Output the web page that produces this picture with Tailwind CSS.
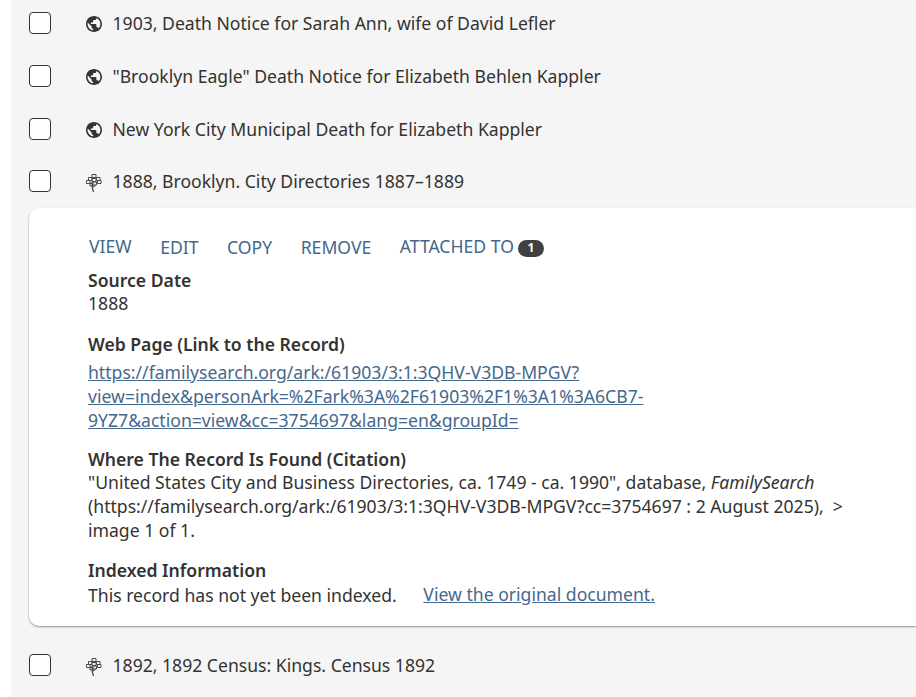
<!DOCTYPE html>
<html lang="en">
<head>
    <meta charset="UTF-8">
    <title>Sources</title>
    <script src="https://cdn.jsdelivr.net/npm/@tailwindcss/browser@4"></script>
</head>
<body class="bg-white overflow-hidden h-[697px] font-['Noto_Sans',sans-serif] text-[#333331] text-[17.6px]">
    <div class="ml-[11px] bg-[#f5f5f5] h-[697px] pl-[18px]">
        <!-- source rows -->
        <div class="flex items-center h-[46px] mb-[7px]">
            <div class="w-[22px] h-[22px] border border-[#333331] rounded-[4px] bg-white"></div>
            <svg class="ml-[35px] w-[16px] h-[16px] mt-[2px] text-[#333331]" viewBox="2 2 20 20"><path fill="currentColor" d="M12 2C6.480 2 2 6.480 2 12s4.480 10 10 10 10-4.480 10-10S17.520 2 12 2zm-1 17.930c-3.950-.49-7-3.850-7-7.930 0-.62.08-1.210.21-1.790L9 15v1c0 1.100.9 2 2 2v1.930zm6.900-2.540c-.26-.81-1-1.390-1.900-1.390h-1v-3c0-.55-.45-1-1-1H8v-2h2c.55 0 1-.45 1-1V7h2c1.100 0 2-.9 2-2v-.41c2.930 1.190 5 4.060 5 7.410 0 2.080-.8 3.970-2.100 5.390z"/></svg>
            <span class="ml-[10.500px]">1903, Death Notice for Sarah Ann, wife of David Lefler</span>
        </div>
        <div class="flex items-center h-[46px] mb-[7px]">
            <div class="w-[22px] h-[22px] border border-[#333331] rounded-[4px] bg-white"></div>
            <svg class="ml-[35px] w-[16px] h-[16px] mt-[2px] text-[#333331]" viewBox="2 2 20 20"><path fill="currentColor" d="M12 2C6.480 2 2 6.480 2 12s4.480 10 10 10 10-4.480 10-10S17.520 2 12 2zm-1 17.930c-3.950-.49-7-3.850-7-7.930 0-.62.08-1.210.21-1.790L9 15v1c0 1.100.9 2 2 2v1.930zm6.900-2.540c-.26-.81-1-1.390-1.900-1.390h-1v-3c0-.55-.45-1-1-1H8v-2h2c.55 0 1-.45 1-1V7h2c1.100 0 2-.9 2-2v-.41c2.930 1.190 5 4.060 5 7.410 0 2.080-.8 3.970-2.100 5.390z"/></svg>
            <span class="ml-[10.500px]">"Brooklyn Eagle" Death Notice for Elizabeth Behlen Kappler</span>
        </div>
        <div class="flex items-center h-[46px] mb-[6px]">
            <div class="w-[22px] h-[22px] border border-[#333331] rounded-[4px] bg-white"></div>
            <svg class="ml-[35px] w-[16px] h-[16px] mt-[2px] text-[#333331]" viewBox="2 2 20 20"><path fill="currentColor" d="M12 2C6.480 2 2 6.480 2 12s4.480 10 10 10 10-4.480 10-10S17.520 2 12 2zm-1 17.930c-3.950-.49-7-3.850-7-7.930 0-.62.08-1.210.21-1.790L9 15v1c0 1.100.9 2 2 2v1.930zm6.900-2.540c-.26-.81-1-1.390-1.900-1.390h-1v-3c0-.55-.45-1-1-1H8v-2h2c.55 0 1-.45 1-1V7h2c1.100 0 2-.9 2-2v-.41c2.930 1.190 5 4.060 5 7.410 0 2.080-.8 3.970-2.100 5.390z"/></svg>
            <span class="ml-[10.500px]">New York City Municipal Death for Elizabeth Kappler</span>
        </div>
        <div class="flex items-center h-[46px] mb-[4px]">
            <div class="w-[22px] h-[22px] border border-[#333331] rounded-[4px] bg-white"></div>
            <svg class="ml-[35px] w-[16px] h-[18px] mt-[4px] text-[#4a4a4a]" viewBox="0 0 16 18" fill="none" stroke="currentColor" stroke-width="1"><path d="M6 .5h4v3H6zM2.500 3.500h3.500v3H2.500zM10.500 3.500h3.500v3h-3.500zM.5 6.500h3.500v3H.5zM6 4.500h4v3H6zM7 8h3.500v3H7zM11.500 6.500h3.500v3h-3.500zM4 9.500h2.500v2.500H4z"/><path stroke-width="1.300" d="M6 8c0 4 .3 7 1.500 10M7 13l2.500-2"/></svg>
            <span class="ml-[10.500px]">1888, Brooklyn. City Directories 1887–1889</span>
        </div>
        <!-- expanded card -->
        <div class="bg-white rounded-l-[10px] shadow-[0_1px_2px_rgba(0,0,0,0.4)] h-[418px] pl-[59px] pt-[26px]">
            <div class="flex items-center h-[26px] text-[#44688c] gap-[28.500px] pl-[1px]">
                <span class="mb-[2px]">VIEW</span>
                <span>EDIT</span>
                <span>COPY</span>
                <span>REMOVE</span>
                <span class="flex items-center gap-[4px]"><span class="mb-[2px]">ATTACHED TO</span> <span class="inline-flex items-center justify-center w-[26px] h-[17px] mt-[2px] rounded-full bg-[#404040] text-white text-[12px] font-bold">1</span></span>
            </div>
            <div class="mt-[8px] leading-[24px] whitespace-nowrap">
                <p class="font-semibold">Source Date</p>
                <p class="-mt-[1px]">1888</p>
                <p class="font-semibold mt-[17px]">Web Page (Link to the Record)</p>
                <a class="block mt-[4px] text-[#44688c] underline" href="#">https://familysearch.org/ark:/61903/3:1:3QHV-V3DB-MPGV?<br>view=index&amp;personArk=%2Fark%3A%2F61903%2F1%3A1%3A6CB7-<br>9YZ7&amp;action=view&amp;cc=3754697&amp;lang=en&amp;groupId=</a>
                <p class="font-semibold mt-[15px]">Where The Record Is Found (Citation)</p>
                <p class="-mt-[1px]">"United States City and Business Directories, ca. 1749 - ca. 1990", database, <i>FamilySearch</i><br>(https://familysearch.org/ark:/61903/3:1:3QHV-V3DB-MPGV?cc=3754697 : 2 August 2025), &nbsp;&gt;<br>image 1 of 1.</p>
                <p class="font-semibold mt-[16px]">Indexed Information</p>
                <p class="mt-[1px]">This record has not yet been indexed. <a class="inline-block -translate-y-px ml-[22px] text-[#44688c] underline" href="#">View the original document.</a></p>
            </div>
        </div>
        <div class="flex items-center h-[46px] mt-[16px]">
            <div class="w-[22px] h-[22px] border border-[#333331] rounded-[4px] bg-white"></div>
            <svg class="ml-[35px] w-[16px] h-[18px] mt-[4px] text-[#4a4a4a]" viewBox="0 0 16 18" fill="none" stroke="currentColor" stroke-width="1"><path d="M6 .5h4v3H6zM2.500 3.500h3.500v3H2.500zM10.500 3.500h3.500v3h-3.500zM.5 6.500h3.500v3H.5zM6 4.500h4v3H6zM7 8h3.500v3H7zM11.500 6.500h3.500v3h-3.500zM4 9.500h2.500v2.500H4z"/><path stroke-width="1.300" d="M6 8c0 4 .3 7 1.500 10M7 13l2.500-2"/></svg>
            <span class="ml-[10.500px]">1892, 1892 Census: Kings. Census 1892</span>
        </div>
    </div>
</body>
</html>
